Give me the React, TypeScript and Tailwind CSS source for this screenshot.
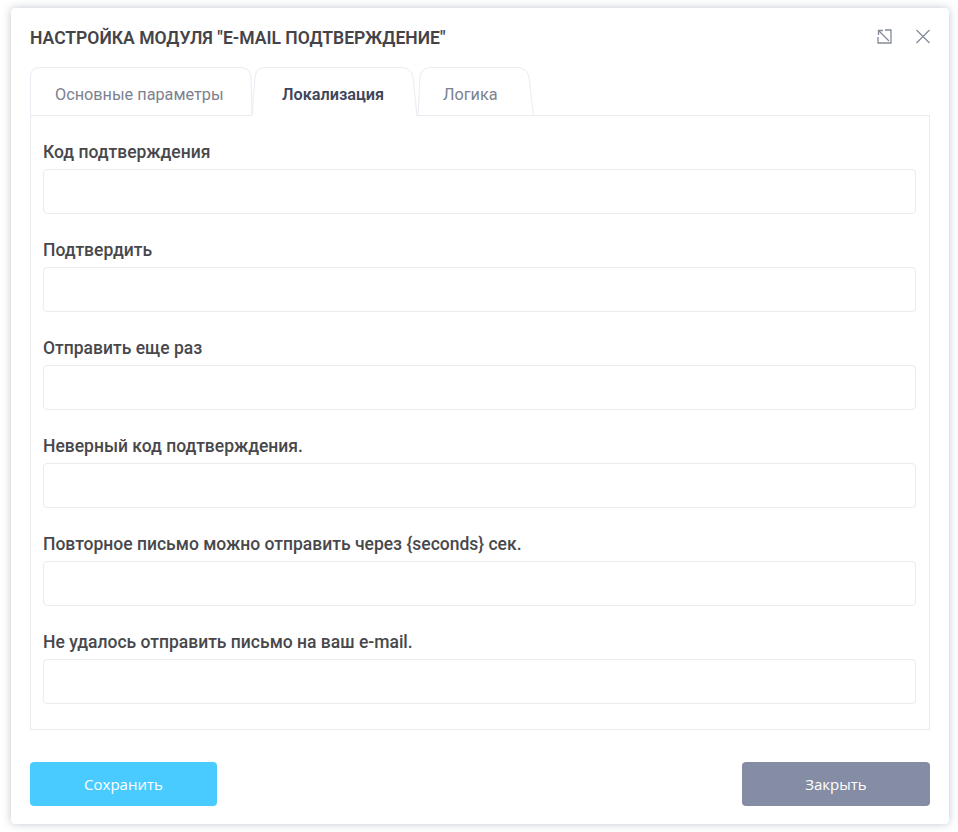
import React from 'react';

const fields = [
  'Код подтверждения',
  'Подтвердить',
  'Отправить еще раз',
  'Неверный код подтверждения.',
  'Повторное письмо можно отправить через {seconds} сек.',
  'Не удалось отправить письмо на ваш e-mail.',
];

const tabs = [
  { label: 'Основные параметры', width: 'w-[222px] pl-[25px]', d: 'M0.5 49V9Q0.5 1 10 0.5H211Q220 1 221 10L222 49', active: false },
  { label: 'Локализация', width: 'w-[165px] pl-[30px]', d: 'M0 49L3 10Q4 1 13 0.5H150Q159 1 161 10L165 49', active: true },
  { label: 'Логика', width: 'w-[117px] pl-[26px]', d: 'M1 49L3 10Q4 1 13 0.5H100Q110 1 112 10L116.5 49', active: false },
];

function Tab({ label, width, d, active }: (typeof tabs)[number]) {
  return (
    <div className={`relative h-[49px] ${width} flex items-center pt-[8px]`}>
      <svg className="absolute left-0 top-0 overflow-visible" width="224" height="49" fill={active ? '#ffffff' : 'none'} stroke="#e9ecf2" strokeWidth="1">
        <path d={d} />
      </svg>
      <span className={`relative text-[16.25px] whitespace-nowrap ${active ? 'font-semibold text-[#3f4659]' : 'text-[#7c8190]'}`}>{label}</span>
    </div>
  );
}

export default function App() {
  return (
    <div className="h-[832px] w-[958px] bg-white pt-2 pl-[11px] font-['Roboto',sans-serif]">
      <div className="h-[816px] w-[938px] rounded-[4px] bg-white px-[19px] shadow-[0_0_8px_rgba(60,70,90,0.3)]">
        <div className="flex h-[59px] items-center justify-between pt-[1px]">
          <h1 className="text-[17.55px] font-semibold text-[#444448]">НАСТРОЙКА МОДУЛЯ "E-MAIL ПОДТВЕРЖДЕНИЕ"</h1>
          <div className="mb-[3px] flex items-center gap-[24px]">
            <svg width="15" height="15" viewBox="0 0 15 15" fill="none" stroke="#858a98" strokeWidth="1.3">
              <path d="M1 8V14H14V1H8" />
              <path d="M1.5 1.5L12 12" />
              <path d="M1.5 6V1.5H6" />
            </svg>
            <svg width="14" height="15" viewBox="0 0 14 15" fill="none" stroke="#858a98" strokeWidth="1.2">
              <path d="M0.5 1L13.5 14M13.5 1L0.5 14" />
            </svg>
          </div>
        </div>

        <div className="relative z-10 flex h-[49px]">
          {tabs.map((t) => (
            <Tab key={t.label} {...t} />
          ))}
        </div>

        <div className="mt-[-1px] h-[615px] border border-[#e9ebf0] pl-3 pr-[13px] pt-[26px]">
          {fields.map((label) => (
            <div key={label} className="mb-[8px] h-[90px]">
              <div className="h-[21px] text-[17.5px] leading-[21px] font-medium text-[#48484c]">{label}</div>
              <input className="mt-[6px] block h-[45px] w-full rounded-[4px] border border-[#e9ebf0] bg-white" />
            </div>
          ))}
        </div>

        <div className="mt-8 flex justify-between">
          <button className="h-11 w-[187px] rounded-[4px] bg-[#4acbff] text-[15px] text-white font-['Open_Sans',sans-serif]">Сохранить</button>
          <button className="h-11 w-[188px] rounded-[4px] bg-[#858da4] text-[15px] text-white font-['Open_Sans',sans-serif]">Закрыть</button>
        </div>
      </div>
    </div>
  );
}
